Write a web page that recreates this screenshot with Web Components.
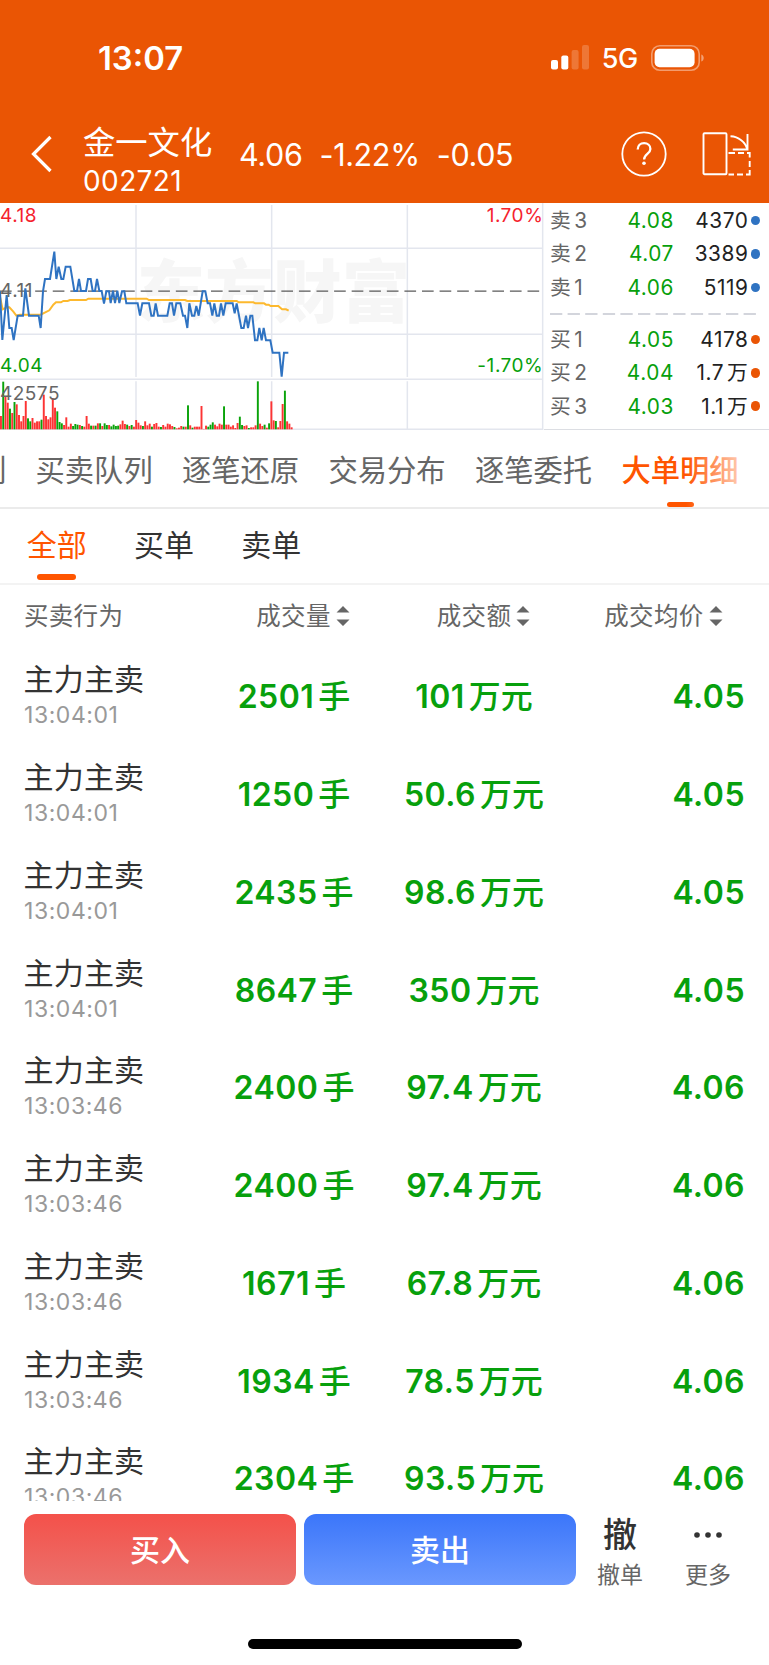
<!DOCTYPE html>
<html lang="zh-CN">
<head>
<meta charset="utf-8">
<title>金一文化 002721</title>
<style>
html, body { margin: 0; padding: 0; }
body {
	width: 769px; height: 1665px; overflow: hidden; background: #fff; color: #333;
	font-family: Inter, "Noto Sans CJK SC", sans-serif;
	--brand: #ea5504; --active: #ff5500; --down: #07a00c; --gray: #666;
}
</style>
</head>
<body>
<stock-app></stock-app>

<script>
class BaseElement extends HTMLElement {
	constructor () {
		super();
		this.attachShadow({ mode: 'open' });
	}
	connectedCallback () {
		const tpl = document.createElement('template');
		tpl.innerHTML = `<style>* { box-sizing: border-box; } ${this.css()}</style>${this.html()}`;
		this.shadowRoot.replaceChildren(tpl.content.cloneNode(true));
	}
	attr (name) { return this.getAttribute(name) || ''; }
	css () { return ':host { display: block; }'; }
	html () { return '<slot></slot>'; }
}


class StatusBar extends BaseElement {
	css () {
		return `
		:host { display: flex; height: 105px; padding: 10px 64px 0 98px; align-items: center; justify-content: space-between; color: #fff; }
		.time { font-size: 32.8px; font-weight: 600; line-height: 40px; padding-top: 1px; }
		.right { display: flex; align-items: center; }
		.net { font-size: 27px; font-weight: 500; line-height: 40px; margin: 2px 13px 0 11.5px; letter-spacing: -.3px; }
		svg { display: block; }
		`;
	}
	html () {
		return `
		<div class="time">13:07</div>
		<div class="right">
			<svg width="39" height="25" viewBox="0 0 39 25" fill="#fff">
				<rect x="0" y="15" width="7" height="9.5" rx="2"/>
				<rect x="10.3" y="10.5" width="7" height="14" rx="2"/>
				<rect x="20.6" y="5" width="7" height="19.5" rx="2" opacity=".2"/>
				<rect x="31" y="0" width="7" height="24.5" rx="2" opacity=".2"/>
			</svg>
			<span class="net">5G</span>
			<svg width="54" height="26" viewBox="0 0 54 26">
				<rect x=".8" y=".8" width="47.4" height="24.4" rx="8" fill="none" stroke="#fff" stroke-opacity=".42" stroke-width="1.6"/>
				<rect x="3.6" y="3.8" width="40" height="18.4" rx="5" fill="#fff"/>
				<path d="M50.3 9.5c3.2 1 3.2 6 0 7z" fill="#fff" opacity=".45"/>
			</svg>
		</div>`;
	}
}
customElements.define('status-bar', StatusBar);


class StockHeader extends BaseElement {
	css () {
		return `
		:host { display: flex; height: 98px; align-items: center; padding: 0 18px 0 30px; color: #fff; font-weight: 400; }
		svg { display: block; flex: none; }
		.name { width: 156px; margin-left: 30px; padding-top: 16px; }
		.title { font-size: 32.3px; line-height: 39px; white-space: nowrap; }
		.code { font-size: 28px; line-height: 39px; letter-spacing: .4px; }
		.quote { display: flex; gap: 17px; flex: 1; font-size: 30.5px; line-height: 40px; letter-spacing: -.35px; padding-top: 1px; }
		.help { margin-right: 35px; }
		`;
	}
	html () {
		return `
		<svg width="23" height="38" viewBox="0 0 23 38" fill="none" stroke="#fff" stroke-width="3.2"><path d="M20.5 2 3.5 19l17 17"/></svg>
		<div class="name">
			<div class="title">${this.attr('name')}</div>
			<div class="code">${this.attr('code')}</div>
		</div>
		<div class="quote"><span>4.06</span><span>-1.22%</span><span>-0.05</span></div>
		<svg class="help" width="46" height="46" viewBox="0 0 46 46" fill="none" stroke="#fff" stroke-width="1.8">
			<circle cx="23" cy="23" r="21.7"/>
			<path d="M16.7 18.6c0-4 2.7-6.4 6.4-6.4 3.6 0 6.3 2.3 6.3 5.7 0 5-6.3 5-6.3 10.5" stroke-width="2.3"/>
			<circle cx="23" cy="32.3" r="1.8" fill="#fff" stroke="none"/>
		</svg>
		<svg width="49" height="46" viewBox="0 0 49 46" fill="none" stroke="#fff" stroke-width="1.9">
			<rect x="1.5" y="2.2" width="23" height="41" rx="1"/>
			<path d="M28.5 5.3c8 .4 15 5.5 16.7 13M45.5 3v15.5H30.8"/>
			<path d="M26.5 22H33m3 0h6m3 0h2.7v4.5m0 3.5v6m0 3v4.5H44m-3 0h-6m-3 0h-5.5"/>
		</svg>`;
	}
}
customElements.define('stock-header', StockHeader);


const volumes = `r40 g143 r100 r80 g62 r49 g82 r75 r43 r24 r40 r85 g33 g24 r34 r20 r24 r24 g29 r104 r40 r30 r36 r94
r65 g54 g22 g18 r13 r36 r8 r17 g10 g16 g14 r13 g10 r8 r40 r17 g11 r11 g11 r18 g18 r10 g18 g13 r13
g9 g14 g10 g11 r15 r26 r16 g14 r10 g13 r8 r28 r20 r12 g10 r24 r12 r17 g8 r16 r19 r8 g7 r13 r8 r17
r15 r10 g7 r3 r5 r10 g8 r8 g72 r12 g5 r8 r8 r8 r70 r1 r11 g8 g14 g21 r14 r9 r17 r14 g69 r14 r14
r8 r12 r4 r19 g38 g13 r10 r12 g4 r6 r6 r12 g144 r17 r10 g14 r5 g18 r84 r27 g25 r6 r25 r76 g116 r24 r17 r6`.split(/\s+/);

const price = `0,274 7,420 20,285 28,384 35,384 41,420 53,347 69,347 76,265 87,347 116,347 122,384 129,274 135,237 150,237
163,155 169,237 176,200 184,237 190,237 197,200 211,200 223,273 231,273 237,237 243,273 258,273 264,237 272,237 278,273
285,273 291,237 298,273 305,273 312,311 319,274 327,274 332,309 339,272 345,309 352,272 358,309 366,274 373,274 379,310
413,310 420,347 427,310 447,310 454,347 461,347 467,310 474,347 502,347 509,310 516,310 522,347 529,310 541,310 549,347
555,347 562,384 568,310 576,347 583,347 589,318 596,347 608,274 616,274 623,310 630,310 637,347 643,310 650,347 657,347
663,310 670,347 677,310 698,310 704,340 710,310 724,384 731,384 738,347 744,384 751,347 757,347 765,421 772,421 778,384
785,421 791,384 798,421 811,421 818,458 838,458 845,530 852,458 865,458`;

const average = `0,290 8,328 14,325 20,322 28,322 40,335 49,347 60,344 122,344 148,331 160,314 168,307 183,307 190,303 203,303
210,300 258,300 265,296 440,296 447,300 555,300 562,303 710,303 716,307 760,307 766,310 792,310 798,314 806,314 812,318
835,318 846,328 858,328 866,332`;

class TimeChart extends BaseElement {
	css () {
		return `
		:host { display: block; width: 544px; height: 227px; }
		svg { display: block; }
		text { font-size: 57px; letter-spacing: 1.6px; }
		.mark { font-family: "Noto Sans CJK SC", sans-serif; font-size: 205px; font-weight: 900; fill: #f6f6f6; letter-spacing: 0; }
		.grid { stroke: #e3e6ee; stroke-width: 4.5; fill: none; }
		`;
	}
	bars () {
		return volumes.map((v, i) => {
			const h = +v.slice(1);
			return `<rect x="${(i * 6.76).toFixed(1)}" y="${688 - h}" width="5.8" height="${h}" fill="${v[0] === 'g' ? '#0aa30a' : '#fc3434'}"/>`;
		}).join('');
	}
	html () {
		return `
		<svg width="544" height="227" viewBox="0 9 1632 681">
			<text class="mark" x="410" y="352">东方财富</text>
			<path class="grid" d="M0 145H1628M0 403H1628M0 538H1628M0 688H1628M408 15V531M815 15V531M1222 15V531M408 544V688M815 544V688M1222 544V688M1628 9V690"/>
			<path d="M0 273.5H1626" stroke="#5a5a5a" stroke-width="4" stroke-dasharray="35 17.75"/>
			${this.bars()}
			<polyline points="${average}" fill="none" stroke="#fdb92e" stroke-width="6"/>
			<polyline points="${price}" fill="none" stroke="#2f73c2" stroke-width="6"/>
			<text x="0" y="67" fill="#f5222d">4.18</text>
			<text x="0" y="291" fill="#666">4.11</text>
			<text x="0" y="516" fill="#07a00c">4.04</text>
			<text x="0" y="600" fill="#666" textLength="180">42575</text>
			<text x="1630" y="67" fill="#f5222d" text-anchor="end">1.70%</text>
			<text x="1630" y="516" fill="#07a00c" text-anchor="end">-1.70%</text>
		</svg>`;
	}
}
customElements.define('time-chart', TimeChart);


class OrderLine extends BaseElement {
	css () {
		return `
		:host { display: grid; grid-template-columns: 40px 84px 74.5px 1fr; height: 33.3px; align-items: center; font-size: 20.8px; line-height: 33px; color: #222; white-space: nowrap; letter-spacing: .6px; }
		.label { color: #666; word-spacing: -3.5px; }
		.price { color: var(--down); text-align: right; }
		.vol { text-align: right; word-spacing: -3.5px; }
		i { width: 9.4px; height: 9.4px; border-radius: 50%; margin-left: 2.3px; background: ${this.attr('side') === 'sell' ? '#2f73c2' : 'var(--brand)'}; }
		`;
	}
	html () {
		return `<span class="label">${this.attr('label')}</span><span class="price">${this.attr('price')}</span>
		<span class="vol">${this.attr('vol')}</span><i></i>`;
	}
}
customElements.define('order-line', OrderLine);


class OrderBook extends BaseElement {
	css () {
		return `
		:host { display: block; flex: 1; height: 227px; padding: 1px 0 0 6px; border-bottom: 1px solid #dcdee3; }
		svg { display: block; margin: 9px 0 8px; }
		`;
	}
	html () {
		return `
		<order-line side="sell" label="卖 3" price="4.08" vol="4370"></order-line>
		<order-line side="sell" label="卖 2" price="4.07" vol="3389"></order-line>
		<order-line side="sell" label="卖 1" price="4.06" vol="5119"></order-line>
		<svg width="207" height="2"><path d="M0 1H206" stroke="#d3d5dc" stroke-width="2" stroke-dasharray="12.3 5.3"/></svg>
		<order-line side="buy" label="买 1" price="4.05" vol="4178"></order-line>
		<order-line side="buy" label="买 2" price="4.04" vol="1.7 万"></order-line>
		<order-line side="buy" label="买 3" price="4.03" vol="1.1 万"></order-line>`;
	}
}
customElements.define('order-book', OrderBook);


class TabItem extends BaseElement {
	css () {
		return `
		:host { display: flex; flex-direction: column; align-items: center; flex: none; height: 100%; justify-content: flex-end; color: var(--tab-color, #666); }
		:host([active]) { color: var(--active); font-weight: var(--tab-weight, 400); }
		span { flex: 1; display: flex; align-items: center; white-space: nowrap; }
		i { width: var(--bar-width); height: var(--bar-height); border-radius: 3px; margin-bottom: var(--bar-gap); }
		:host([active]) i { background: var(--active); }
		`;
	}
	html () { return '<span><slot></slot></span><i></i>'; }
}
customElements.define('tab-item', TabItem);


class MainTabs extends BaseElement {
	css () {
		return `
		:host { display: flex; height: 79px; border-bottom: 2px solid #ebebeb; overflow: hidden; font-size: 29.3px; line-height: 36px; --bar-width: 27px; --bar-height: 4.5px; --bar-gap: .5px; --tab-weight: 500; }
		.track { display: flex; gap: 29.3px; margin-left: -111px; flex: none; padding-top: 9px; }
		.fade { flex: none; width: 83px; margin-left: -53px; background: linear-gradient(90deg, #fff0, #fffc 75%, #fff); z-index: 1; }
		`;
	}
	html () { return '<div class="track"><slot></slot></div><div class="fade"></div>'; }
}
customElements.define('main-tabs', MainTabs);


class FilterTabs extends BaseElement {
	css () {
		return `
		:host { display: flex; gap: 47.2px; height: 76px; padding: 6px 0 0 26.8px; border-bottom: 2px solid #f3f3f3; font-size: 30px; line-height: 36px; --tab-color: #333; --bar-width: 39px; --bar-height: 6px; --bar-gap: 3px; }
		`;
	}
}
customElements.define('filter-tabs', FilterTabs);


class SortLabel extends BaseElement {
	css () {
		return `
		:host { display: flex; align-items: center; justify-content: center; gap: 5px; }
		svg { display: block; }
		`;
	}
	html () {
		return `<slot></slot><svg width="14" height="20" viewBox="0 0 14 20" fill="#666"><path d="M.5 6.5 7 0l6.5 6.5zM.5 13.5 7 20l6.5-6.5z"/></svg>`;
	}
}
customElements.define('sort-label', SortLabel);


class TradeHead extends BaseElement {
	css () {
		return `
		:host { display: grid; grid-template-columns: 189px 180px 181px 1fr; height: 64px; padding: 0 46.5px 3px 24px; align-items: center; font-size: 24.5px; line-height: 32px; letter-spacing: .3px; color: var(--gray); white-space: nowrap; }
		sort-label:last-child { justify-content: flex-end; }
		`;
	}
	html () {
		return `<span>买卖行为</span><sort-label>成交量</sort-label><sort-label>成交额</sort-label><sort-label>成交均价</sort-label>`;
	}
}
customElements.define('trade-head', TradeHead);


class TradeRow extends BaseElement {
	css () {
		return `
		:host { display: grid; grid-template-columns: 180px 180px 180px 1fr; height: 97.75px; padding: 0 24px; align-items: center; white-space: nowrap; }
		.who { padding-bottom: 5px; }
		.action { font-size: 30px; line-height: 40px; color: #333; letter-spacing: .2px; margin-left: -.5px; }
		.time { font-size: 23px; line-height: 32px; color: #999; letter-spacing: .55px; }
		.num { color: var(--down); font-size: 32px; font-weight: 600; line-height: 40px; text-align: center; letter-spacing: .45px; padding-bottom: 1px; }
		.num span { font-weight: 500; margin-left: 4px; letter-spacing: 0; }
		.num:last-child { text-align: right; }
		`;
	}
	html () {
		return `
		<div class="who"><div class="action">主力主卖</div><div class="time">${this.attr('time')}</div></div>
		<div class="num">${this.attr('vol')}<span>手</span></div>
		<div class="num">${this.attr('amount')}<span>万元</span></div>
		<div class="num">${this.attr('price')}</div>`;
	}
}
customElements.define('trade-row', TradeRow);


const trades = [
	['13:04:01', '2501', '101', '4.05'],
	['13:04:01', '1250', '50.6', '4.05'],
	['13:04:01', '2435', '98.6', '4.05'],
	['13:04:01', '8647', '350', '4.05'],
	['13:03:46', '2400', '97.4', '4.06'],
	['13:03:46', '2400', '97.4', '4.06'],
	['13:03:46', '1671', '67.8', '4.06'],
	['13:03:46', '1934', '78.5', '4.06'],
	['13:03:46', '2304', '93.5', '4.06'],
];

class TradeList extends BaseElement {
	css () { return ':host { display: block; height: 852px; overflow: hidden; }'; }
	html () {
		return trades.map(([time, vol, amount, price]) =>
			`<trade-row time="${time}" vol="${vol}" amount="${amount}" price="${price}"></trade-row>`).join('');
	}
}
customElements.define('trade-list', TradeList);


class TradeButton extends BaseElement {
	css () {
		const [from, to] = this.attr('kind') === 'buy' ? ['#f4514a', '#eb716c'] : ['#3b76fa', '#6a98fe'];
		return `
		:host { display: flex; width: 272px; height: 71px; border-radius: 12px; align-items: center; justify-content: center; color: #fff; font-size: 30px; line-height: 40px; font-weight: 500; background: linear-gradient(${from}, ${to}); }
		`;
	}
}
customElements.define('trade-button', TradeButton);


class ToolButton extends BaseElement {
	css () {
		return `
		:host { display: flex; flex-direction: column; align-items: center; width: 88px; height: 71px; color: var(--gray); font-size: 23px; line-height: 30px; }
		.icon { height: 40px; margin-bottom: 6px; font-size: 34px; line-height: 42px; font-weight: 500; color: #333; }
		`;
	}
	html () { return '<div class="icon"><slot name="icon"></slot></div><slot></slot>'; }
}
customElements.define('tool-button', ToolButton);


class BottomBar extends BaseElement {
	css () {
		return `
		:host { display: block; padding-top: 13px; }
		.bar { display: flex; padding-left: 24px; }
		trade-button { margin-right: 8px; }
		trade-button + trade-button { margin-right: 0; }
		.home { width: 274px; height: 10px; border-radius: 5px; background: #000; margin: 54px auto 0; }
		svg { display: block; }
		`;
	}
	html () {
		return `
		<div class="bar">
			<trade-button kind="buy">买入</trade-button>
			<trade-button kind="sell">卖出</trade-button>
			<tool-button><span slot="icon">撤</span>撤单</tool-button>
			<tool-button><svg slot="icon" width="30" height="40" fill="#333"><circle cx="4" cy="21" r="2.8"/><circle cx="15" cy="21" r="2.8"/><circle cx="26" cy="21" r="2.8"/></svg>更多</tool-button>
		</div>
		<div class="home"></div>`;
	}
}
customElements.define('bottom-bar', BottomBar);


class StockApp extends BaseElement {
	css () {
		return `
		:host { display: block; width: 769px; height: 1665px; overflow: hidden; background: #fff; }
		header { background: var(--brand); height: 203px; }
		.market { display: flex; height: 227px; }
		`;
	}
	html () {
		return `
		<header>
			<status-bar></status-bar>
			<stock-header name="金一文化" code="002721"></stock-header>
		</header>
		<div class="market"><time-chart></time-chart><order-book></order-book></div>
		<main-tabs>
			<tab-item>分时序列</tab-item>
			<tab-item>买卖队列</tab-item>
			<tab-item>逐笔还原</tab-item>
			<tab-item>交易分布</tab-item>
			<tab-item>逐笔委托</tab-item>
			<tab-item active>大单明细</tab-item>
		</main-tabs>
		<filter-tabs>
			<tab-item active>全部</tab-item>
			<tab-item>买单</tab-item>
			<tab-item>卖单</tab-item>
		</filter-tabs>
		<trade-head></trade-head>
		<trade-list></trade-list>
		<bottom-bar></bottom-bar>`;
	}
}
customElements.define('stock-app', StockApp);
</script>
</body>
</html>
